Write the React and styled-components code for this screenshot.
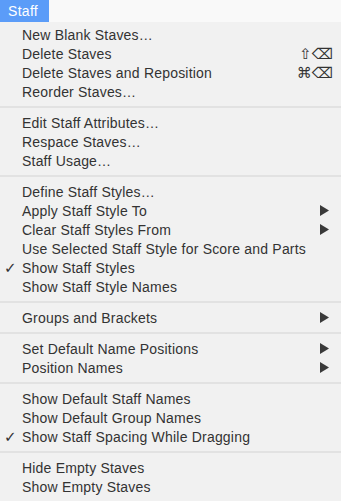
import styled, { createGlobalStyle } from "styled-components"

const GlobalStyle = createGlobalStyle`
  html, body {
    margin: 0;
    padding: 0;
    background: #f1f1f1;
  }
  body {
    font-family: "Liberation Sans", Arial, sans-serif;
    -webkit-font-smoothing: antialiased;
  }
`

const groups = [
  [
    { label: "New Blank Staves…" },
    { label: "Delete Staves", shortcut: "⇧⌫" },
    { label: "Delete Staves and Reposition", shortcut: "⌘⌫" },
    { label: "Reorder Staves…" },
  ],
  [
    { label: "Edit Staff Attributes…" },
    { label: "Respace Staves…" },
    { label: "Staff Usage…" },
  ],
  [
    { label: "Define Staff Styles…" },
    { label: "Apply Staff Style To", submenu: true },
    { label: "Clear Staff Styles From", submenu: true },
    { label: "Use Selected Staff Style for Score and Parts" },
    { label: "Show Staff Styles", checked: true },
    { label: "Show Staff Style Names" },
  ],
  [{ label: "Groups and Brackets", submenu: true }],
  [
    { label: "Set Default Name Positions", submenu: true },
    { label: "Position Names", submenu: true },
  ],
  [
    { label: "Show Default Staff Names" },
    { label: "Show Default Group Names" },
    { label: "Show Staff Spacing While Dragging", checked: true },
  ],
  [{ label: "Hide Empty Staves" }, { label: "Show Empty Staves" }],
]

const App = () => {
  return (
    <Screen>
      <GlobalStyle />
      <MenuBar>
        <MenuTitle>Staff</MenuTitle>
      </MenuBar>
      <Menu>
        {groups.map((group, gi) => (
          <Group key={gi}>
            {gi > 0 && <Separator />}
            {group.map((item) => (
              <Item key={item.label}>
                <Check>{item.checked ? "✓" : ""}</Check>
                <Label>{item.label}</Label>
                {item.shortcut && <Shortcut>{item.shortcut}</Shortcut>}
                {item.submenu && (
                  <Arrow viewBox="0 0 9 11">
                    <path d="M0 0 L9 5.5 L0 11 Z" fill="#3a3a3a" />
                  </Arrow>
                )}
              </Item>
            ))}
          </Group>
        ))}
      </Menu>
    </Screen>
  )
}

const Screen = styled.div`
  width: 341px;
  height: 501px;
  overflow: hidden;
  display: flex;
  flex-direction: column;
`

const MenuBar = styled.div`
  height: 22px;
  background: #f9f9f9;
  display: flex;
`

const MenuTitle = styled.div`
  width: 49px;
  background: #5b9cf8;
  color: #fff;
  font-size: 14px;
  letter-spacing: 0.3px;
  line-height: 22px;
  padding-left: 8px;
  box-sizing: border-box;
`

const Menu = styled.div`
  flex: 1;
  background: #f1f1f1;
  padding-top: 3px;
  display: flex;
  flex-direction: column;
`

const Group = styled.div`
  display: flex;
  flex-direction: column;
`

const Separator = styled.div`
  height: 2px;
  margin: 5px 0;
  background: #e2e2e2;
`

const Item = styled.div`
  height: 19px;
  display: flex;
  align-items: center;
  color: #333;
  font-size: 14px;
  letter-spacing: 0.2px;
`

const Check = styled.span`
  width: 22px;
  padding-left: 4px;
  box-sizing: border-box;
  font-family: "DejaVu Sans", sans-serif;
  font-size: 15px;
  font-weight: bold;
  color: #333;
`

const Label = styled.span`
  flex: 1;
  white-space: nowrap;
`

const Shortcut = styled.span`
  font-family: "DejaVu Sans", sans-serif;
  font-size: 15px;
  color: #333;
  padding-right: 8px;
  letter-spacing: 0;
`

const Arrow = styled.svg`
  width: 9px;
  height: 11px;
  margin-right: 12px;
`

export default App
